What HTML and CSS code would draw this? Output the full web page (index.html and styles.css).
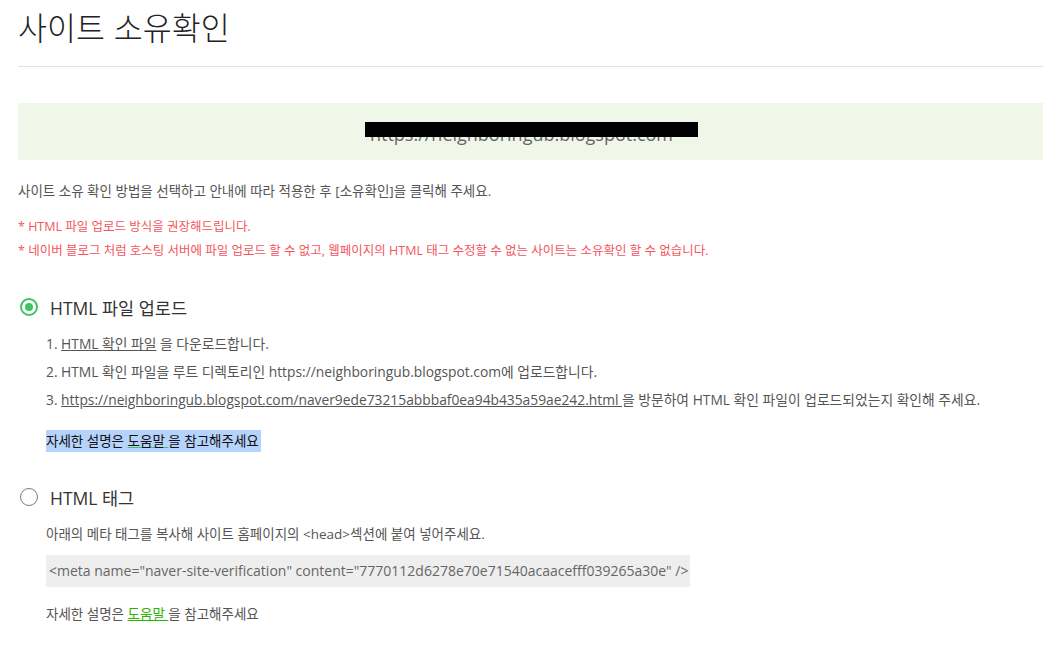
FILE: index.html
```html
<!DOCTYPE html>
<html lang="ko">
<head>
<meta charset="utf-8">
<link rel="stylesheet" href="styles.css">
</head>
<body>
<div class="page">
  <h1 class="title">사이트 소유확인</h1>
  <div class="divider"></div>
  <div class="site-box">
    <span class="site-url">https://neighboringub.blogspot.com</span>
    <span class="redact"></span>
  </div>
  <p class="intro">사이트 소유 확인 방법을 선택하고 안내에 따라 적용한 후 [소유확인]을 클릭해 주세요.</p>
  <p class="warn">* HTML 파일 업로드 방식을 권장해드립니다.</p>
  <p class="warn">* 네이버 블로그 처럼 호스팅 서버에 파일 업로드 할 수 없고, 웹페이지의 HTML 태그 수정할 수 없는 사이트는 소유확인 할 수 없습니다.</p>

  <div class="option first">
    <div class="radio-row">
      <span class="radio checked"></span>
      <span class="radio-label">HTML 파일 업로드</span>
    </div>
    <ol class="steps">
      <li>1. <a class="ulink">HTML 확인 파일</a> 을 다운로드합니다.</li>
      <li>2. HTML 확인 파일을 루트 디렉토리인 https://neighboringub.blogspot.com에 업로드합니다.</li>
      <li>3. <a class="ulink">https://neighboringub.blogspot.com/naver9ede73215abbbaf0ea94b435a59ae242.html </a>을 방문하여 HTML 확인 파일이 업로드되었는지 확인해 주세요.</li>
    </ol>
    <div class="help highlighted"><span class="hl">자세한 설명은 <a class="glink-hl">도움말 </a>을 참고해주세요</span></div>
  </div>

  <div class="option second">
    <div class="radio-row">
      <span class="radio"></span>
      <span class="radio-label">HTML 태그</span>
    </div>
    <p class="desc">아래의 메타 태그를 복사해 사이트 홈페이지의 &lt;head&gt;섹션에 붙여 넣어주세요.</p>
    <div class="code">&lt;meta name="naver-site-verification" content="7770112d6278e70e71540acaacefff039265a30e" /&gt;</div>
    <p class="help">자세한 설명은 <a class="glink">도움말 </a>을 참고해주세요</p>
  </div>
</div>
</body>
</html>
```

FILE: styles.css
```css
* { box-sizing: border-box; }
html, body { margin: 0; padding: 0; background: #fff; }
body {
  font-family: "Open Sans", "Noto Sans CJK KR", sans-serif;
  color: #555;
}
.page { padding-left: 18px; overflow: hidden; }
.title {
  margin: 0;
  padding-top: 5px;
  height: 47px;
  line-height: 42px;
  font-family: "Noto Sans CJK KR", sans-serif;
  font-size: 31.5px;
  font-weight: 300;
  color: #222;
}
.divider {
  margin-top: 19px;
  height: 1px;
  background: #e2e2e2;
}
.site-box {
  position: relative;
  margin-top: 36px;
  height: 57px;
  background: #f0f7e8;
  display: flex;
  align-items: center;
  justify-content: center;
  padding-right: 18px;
}
.site-url {
  font-size: 18px;
  color: #666;
  padding-top: 4px;
}
.redact {
  position: absolute;
  left: 347px;
  top: 19px;
  width: 333px;
  height: 15px;
  background: #000;
}
.intro {
  margin: 21px 0 0;
  font-size: 13.5px;
  line-height: 20px;
  color: #555;
}
.warn {
  margin: 0;
  font-size: 12.5px;
  line-height: 24px;
  color: #f4555e;
}
.intro + .warn { margin-top: 14px; }
.option.first { margin-top: 32px; }
.option.second { margin-top: 33px; }
.radio-row {
  display: flex;
  align-items: center;
  height: 24px;
  gap: 12px;
  padding-left: 2px;
}
.radio {
  width: 18px;
  height: 18px;
  border-radius: 50%;
  border: 1.6px solid #7a7a7a;
  display: flex;
  align-items: center;
  justify-content: center;
}
.radio.checked { border: 2.5px solid #3ec45f; }
.radio.checked::after {
  content: "";
  width: 8px;
  height: 8px;
  border-radius: 50%;
  background: #3ec45f;
}
.radio-label {
  font-size: 17.5px;
  color: #333;
}
.steps {
  list-style: none;
  margin: 11px 0 0;
  padding-left: 28px;
}
.steps li {
  font-size: 13.8px;
  line-height: 28px;
  color: #555;
  white-space: nowrap;
}
.ulink { color: #555; text-decoration: underline; }
.help {
  margin: 0;
  padding-left: 28px;
  font-size: 13.5px;
  line-height: 20px;
  color: #555;
}
.help.highlighted { margin-top: 16px; }
.hl {
  display: inline-block;
  background: #b5d3fb;
  color: #111;
  height: 22px;
  line-height: 22px;
  padding-right: 2px;
}
.glink-hl { color: #111; text-decoration: underline; text-decoration-color: #3ec45f; }
.glink { color: #2db400; text-decoration: underline; }
.desc {
  margin: 15px 0 0;
  padding-left: 28px;
  font-size: 13.5px;
  line-height: 20px;
  color: #555;
}
.code {
  margin: 11px 0 0 28px;
  width: 644px;
  height: 32px;
  line-height: 32px;
  background: #eeeeee;
  color: #666;
  font-size: 14px;
  padding-left: 3px;
  white-space: nowrap;
}
.code + .help { margin-top: 17px; }
```
